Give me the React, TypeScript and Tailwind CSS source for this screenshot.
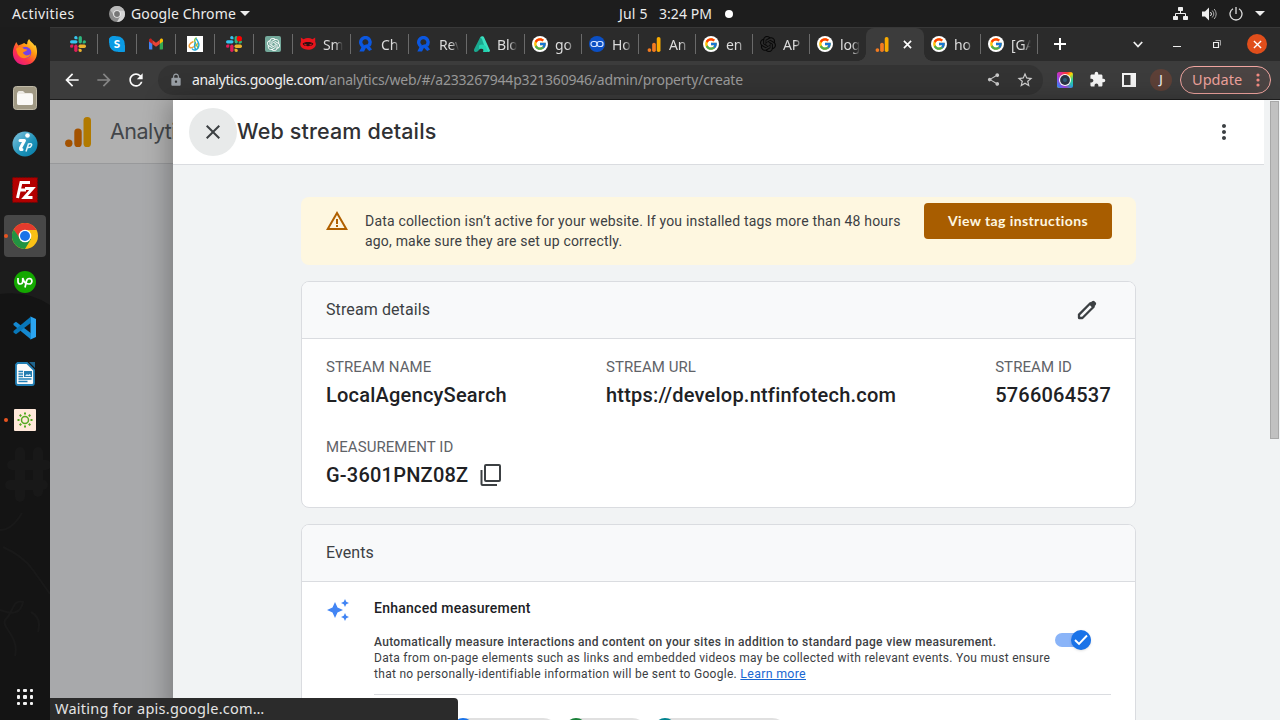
import React from "react";
import {
  MdArrowBack, MdArrowForward, MdRefresh, MdLock, MdShare, MdStarBorder, MdExtension,
  MdMoreVert, MdClose, MdWarningAmber, MdAutoAwesome,
} from "react-icons/md";
import { FcGoogle } from "react-icons/fc";
import { SiOpenai } from "react-icons/si";

const ui = "font-['Noto_Sans','Open_Sans',sans-serif]";
const roboto = "font-[Roboto,sans-serif]";

function Slack({ dot = false }: { dot?: boolean }) {
  return (
    <svg width="16" height="16" viewBox="0 0 16 16">
      <g fill="#36c5f0"><rect x="0" y="4.2" width="7.5" height="3.3" rx="1.65" /><path d="M7.5 3.3H5.9A1.65 1.65 0 1 1 7.5 1.65z" /></g>
      <g fill="#2eb67d"><rect x="8.6" y="0" width="3.3" height="7.5" rx="1.65" /><path d="M12.7 7.5V5.9a1.65 1.65 0 1 1 1.65 1.6z" /></g>
      <g fill="#ecb22e"><rect x="8.5" y="8.6" width="7.5" height="3.3" rx="1.65" /><path d="M8.5 12.7h1.6a1.65 1.65 0 1 1-1.6 1.65z" /></g>
      <g fill="#e01e5a"><rect x="4.2" y="8.5" width="3.3" height="7.5" rx="1.65" /><path d="M3.3 8.5v1.6A1.65 1.65 0 1 1 1.65 8.5z" /></g>
      {dot && <circle cx="13.3" cy="2.7" r="2.7" fill="#f00" />}
    </svg>
  );
}

function Skype() {
  return (
    <svg width="16" height="16" viewBox="0 0 16 16">
      <path d="M4.7 0a4.6 4.6 0 0 1 2.5.3A7.8 7.8 0 0 1 15.700 9 4.700 4.700 0 0 1 9 15.700 7.800 7.800 0 0 1 .3 7.200 4.700 4.700 0 0 1 4.700 0z" fill="#0b9be4" />
      <text x="8" y="12" textAnchor="middle" fontSize="11.5" fontWeight="900" fill="#fff" fontFamily="Lato">S</text>
    </svg>
  );
}

function Gmail() {
  return (
    <svg width="16" height="16" viewBox="0 0 16 16">
      <path d="M1 3.6v8.800c0 .6.4 1 1 1h2.300V6.600z" fill="#4285f4" />
      <path d="M15 3.600v8.800c0 .6-.4 1-1 1h-2.300V6.600z" fill="#34a853" />
      <path d="M11.700 4v4L15 5.500V4c0-1.600-1.700-1.900-2.400-1.300z" fill="#fbbc04" />
      <path d="M4.300 8V4L8 6.800 11.700 4v4L8 10.800z" fill="#ea4335" />
      <path d="M1 4v1.500L4.300 8V4l-.9-1.300C2.700 2.100 1 2.400 1 4z" fill="#c5221f" />
    </svg>
  );
}

function Swirl() {
  return (
    <svg width="16" height="16" viewBox="0 0 16 16">
      <path fill="#fff" d="M0 0h16v16H0z" />
      <g fill="none" strokeWidth="1.400">
        <path d="M6.500 5.500C2.500 7 1 10.500 3 11.500s7-2 8.500-5" stroke="#f2a03a" />
        <path d="M9.500 1.500C5.500 4 9 8 11.500 12.500" stroke="#8fc43a" />
        <path d="M9 2.500c2 3 4 5 2.500 8.500S6.500 15 5 12.500M8.500 6c-1.500 3-1 6 .5 8" stroke="#24a9d6" />
      </g>
    </svg>
  );
}

function ChatGpt() {
  return (
    <span className="flex h-4 w-4 items-center justify-center rounded-[2px] bg-[#74a99b]">
      <SiOpenai size={13} color="#fff" />
    </span>
  );
}

function Ninja() {
  return (
    <svg width="16" height="16" viewBox="0 0 16 16">
      <path d="M.8 1.500 3.500 3.200a10 10 0 0 1 9 0l2.700-1.700v4.200C17.500 10.500 13 13.800 8 13.800S-1.500 10.500 1 5.700z" fill="#e8141c" />
      <path d="M2.800 7.600C3.500 5.500 12.500 5.500 13.200 7.600c.8 3.400-11.200 3.400-10.400 0z" fill="#2b1012" />
      <path d="m4 7.500 3 1.200c-.8 1.200-2.600.8-3-1.200zm8 0L9 8.700c.8 1.200 2.600.8 3-1.200z" fill="#e8141c" />
    </svg>
  );
}

function RMark() {
  return (
    <svg width="16" height="16" viewBox="0 0 16 16">
      <path d="M5.200 10.400A4.700 4.700 0 1 1 10.800 9.500" fill="none" stroke="#0b57e0" strokeWidth="3.400" />
      <path d="M6.500 9q4.500-1.500 4.500.5l3 4-2.800 1.500L8 11.700l-2 3.800H1.300l2.500-5z" fill="#0b57e0" />
    </svg>
  );
}

function AMark() {
  return (
    <svg width="16" height="16" viewBox="0 0 16 16">
      <path d="M6.200 1.200C7-.2 9.500-.2 10 1.200l6 13.300q0 1.500-2 1.500L6 6z" fill="#3ae0c0" />
      <path d="M6.200 1.200 0 13.500c-.5 2 1.500 3 3.500 2L10 9 8 3z" fill="#1aa88f" />
      <path d="M5 9.500c3-2 5-1 7 1l2 5.500H9c1-3 0-4-4-3z" fill="#22d3b0" />
    </svg>
  );
}

function Infinity() {
  return (
    <svg width="16" height="16" viewBox="0 0 16 16">
      <circle cx="8" cy="8" r="8" fill="#0b4fc4" />
      <g fill="none" stroke="#d6e4ff" strokeWidth="1.200"><rect x="2" y="5.500" width="6" height="5" rx="2.200" /><rect x="8" y="5.500" width="6" height="5" rx="2.200" /></g>
    </svg>
  );
}

function GA({ w, h, dim = false }: { w: number; h: number; dim?: boolean }) {
  const a = dim ? "#a35200" : "#f37b20";
  return (
    <svg className="shrink-0" width={w} height={h} viewBox="0 0 26 30">
      <circle cx="3.800" cy="26.200" r="3.700" fill={a} />
      <rect x="9.300" y="11.500" width="7.400" height="18.500" rx="3.600" fill={a} />
      <rect x="18.500" y="0" width="7.500" height="30" rx="3.600" fill={dim ? "#b17a00" : "#f9ab00"} />
    </svg>
  );
}

function SmallGA() {
  return <span className="flex h-4 w-4 shrink-0 items-center justify-center"><GA w={14} h={15} /></span>;
}

function G() {
  return <span className="flex h-4 w-4 shrink-0 items-center justify-center rounded-full bg-white"><FcGoogle size={14} /></span>;
}

function Cross({ size, width }: { size: number; width: number }) {
  return <svg width={size} height={size} viewBox="0 0 10 10"><path d="m1 1 8 8M9 1 1 9" stroke="#fff" strokeWidth={width} /></svg>;
}

const pinned = [<Slack />, <Skype />, <Gmail />, <Swirl />, <Slack dot />, <ChatGpt />];
const tabs: { w: string; icon: React.ReactNode; label: string }[] = [
  { w: "w-[58px]", icon: <Ninja />, label: "Sm" },
  { w: "w-[58px]", icon: <RMark />, label: "Ch" },
  { w: "w-[58px]", icon: <RMark />, label: "Rev" },
  { w: "w-[58px]", icon: <AMark />, label: "Blo" },
  { w: "w-[57px]", icon: <G />, label: "go" },
  { w: "w-[57px]", icon: <Infinity />, label: "Ho" },
  { w: "w-[57px]", icon: <SmallGA />, label: "An" },
  { w: "w-[57px]", icon: <G />, label: "en" },
  { w: "w-[57px]", icon: <SiOpenai size={16} color="#080808" />, label: "AP" },
];

function Sep() {
  return <span className="h-5 w-px shrink-0 bg-[#6a6a6a]" />;
}

function Tab({ w, icon, label, sep = true }: { w: string; icon: React.ReactNode; label: string; sep?: boolean }) {
  return (
    <div className={`flex h-full shrink-0 items-center pl-[7px] ${w}`}>
      {icon}
      <span className="ml-[7px] w-[20px] flex-none overflow-hidden whitespace-nowrap text-[14px] tracking-[-0.2px] text-[#dcdcdc] [mask-image:linear-gradient(90deg,#000_60%,transparent)]">{label}</span>
      <span className="flex-1" />
      {sep && <Sep />}
    </div>
  );
}

function TopBar() {
  return (
    <div className="grid h-[27px] shrink-0 grid-cols-[1fr_auto_1fr] items-center bg-[#1d1d1d] text-[14px] text-[#ececec]">
      <div className="flex items-center">
        <span className="ml-3 w-[97px] whitespace-nowrap tracking-[0.420px]">Activities</span>
        <svg width="16" height="16" viewBox="0 0 16 16">
          <circle cx="8" cy="8" r="8" fill="#8c8c8c" />
          <path d="M8 4.500h7.200A8 8 0 0 0 1.200 4L4.800 9.500z" fill="#b9b9b9" />
          <path d="M15.200 4.500H8l3.300 5.500L8 16a8 8 0 0 0 7.200-11.500z" fill="#d5d5d5" />
          <circle cx="8" cy="8" r="3.800" fill="#f0f0f0" /><circle cx="8" cy="8" r="2.900" fill="#777" />
        </svg>
        <span className="ml-[6px] w-[104px] whitespace-nowrap tracking-[0.120px]">Google Chrome</span>
        <svg className="ml-[5px]" width="10" height="5" viewBox="0 0 10 5"><path d="M0 0h10L5 5z" fill="#ececec" /></svg>
      </div>
      <div className="flex items-center pl-[72px]">
        <span className="w-[30px] whitespace-nowrap pb-px tracking-[0.200px]">Jul 5</span>
        <span className="ml-[10px] w-[54px] whitespace-nowrap pb-px tracking-[0.050px]">3:24 PM</span>
        <span className="ml-[12px] h-2 w-2 rounded-full bg-white" />
      </div>
      <div className="flex items-center justify-end pr-[15px] text-[#eee]">
        <svg width="15" height="14" viewBox="0 0 15 14" fill="#eee"><rect x="5" width="5" height="4" rx=".7" /><rect y="9" width="5" height="4" rx=".7" /><rect x="10" y="9" width="5" height="4" rx=".7" /><path d="M2.500 9V6.500h10V9M7.500 4v2.500" fill="none" stroke="#eee" /></svg>
        <svg className="ml-[14px]" width="15" height="14" viewBox="0 0 15 14"><path d="M0 4.500h3L7 .5v13l-4-4H0z" fill="#eee" /><path d="M8.500 5q2 2 0 4" fill="none" stroke="#eee" /><path d="M10.200 3.500q3.200 3.500 0 7M12.200 2q4 5 0 10" fill="none" stroke="#aaa" /></svg>
        <svg className="ml-[12px]" width="14" height="14" viewBox="0 0 14 14" fill="none" stroke="#ddd" strokeWidth="1.300"><path d="M4 1.800a6 6 0 1 0 6 0M7 0v7" /></svg>
        <svg className="ml-[12px]" width="10" height="5" viewBox="0 0 10 5"><path d="M0 0h10L5 5z" fill="#ececec" /></svg>
      </div>
    </div>
  );
}

function DockItem({ children, active = false, dot = false }: { children: React.ReactNode; active?: boolean; dot?: boolean }) {
  return (
    <div className="flex h-[46px] shrink-0 items-center justify-center">
      <div className={`relative flex h-[42px] w-[42px] items-center justify-center rounded ${active ? "bg-[#474747]" : ""}`}>
        {children}
        {dot && <span className="absolute left-0 top-[19px] h-1 w-1 rounded-full bg-[#e95420]" />}
      </div>
    </div>
  );
}

function Dock() {
  return (
    <div className="relative flex w-[50px] shrink-0 flex-col overflow-hidden bg-[#1c1c1c] pt-[2px]">
      <svg className="absolute inset-0" width="50" height="693" viewBox="0 0 50 693">
        <path d="M0 267Q28 263 50 278V693H0z" fill="#141414" />
        <g fill="none" stroke="#191919" strokeWidth="2"><path d="M0 503q12 0 22-17M3 520q20 9 30 23t17 24M0 583q20 8 23-8c-10-3-10 10-17 17s14 17 9 37M31 585q11 6 7 20" /></g>
        <g stroke="#181818" strokeWidth="10" strokeLinecap="round"><path d="M12 438h34M10 458h33M20 425v45M38 425v40" /></g>
      </svg>
      <div className="relative flex flex-1 flex-col">
        <DockItem>
          <svg width="26" height="26" viewBox="0 0 26 26">
            <defs><linearGradient id="fx" x1="1" y1="0" x2=".2" y2="1"><stop offset="0" stopColor="#fff44f" /><stop offset=".4" stopColor="#ff980e" /><stop offset=".7" stopColor="#ff3647" /><stop offset="1" stopColor="#e31587" /></linearGradient></defs>
            <path d="M3 5.500 4.200 3l2 3.500 4-1.500c.5-.5 1-.8 2-1 .8 1 2 1.500 3 1 0-2 .6-3.600 2-5 .5 2.300 3.500 3.300 5.300 6.500l1-.2C27 13 25 26 13 26 2 26-2 15 3 5.500z" fill="url(#fx)" />
            <circle cx="13.500" cy="13.500" r="5.800" fill="#7542e5" />
            <path d="M4 10c3-3 6-2 8 0l3 .5c0 2-4 2-4 3.500 2 3 5 3 7.500 1-1 5-10 6-13 0z" fill="#ff8a16" />
          </svg>
        </DockItem>
        <DockItem>
          <svg width="24" height="24" viewBox="0 0 24 24"><rect x=".5" y=".5" width="23" height="23" rx="3" fill="#a09984" stroke="#beb8a6" /><path d="M5 6q0-1 1-1h4l2 2h6q2 0 2 2v8q0 2-2 2H6q-2 0-2-2V7z" fill="#ece9e2" /><rect x="4" y="8" width="16" height="11" rx="2" fill="#faf9f6" /></svg>
        </DockItem>
        <DockItem>
          <svg width="26" height="26" viewBox="0 0 26 26">
            <defs><linearGradient id="ip" x1="0" y1="0" x2="1" y2="1"><stop stopColor="#85c5df" /><stop offset=".6" stopColor="#1c91b8" /><stop offset="1" stopColor="#077aa5" /></linearGradient></defs>
            <circle cx="13" cy="13" r="12.500" fill="url(#ip)" />
            <circle cx="15.500" cy="4.500" r="2.300" fill="#fff" />
            <path d="M8 9.500h4.500L8.500 17q-.5 2 1.500 1.500" fill="none" stroke="#fff" strokeWidth="3" strokeLinejoin="round" strokeLinecap="round" />
            <path d="m14 20.500 2.500-7.500q4-1 3 1.500t-4 2" fill="none" stroke="#e6f5fa" strokeWidth="1.500" />
          </svg>
        </DockItem>
        <DockItem>
          <svg width="26" height="26" viewBox="0 0 26 26"><rect x=".7" y=".7" width="24.600" height="24.600" fill="#b30000" stroke="#830000" strokeDasharray="2 1" /><path d="M5.500 21 9 5.500h9M7.500 13H14M13 11.500h7.500L12.500 20.500h8" fill="none" stroke="#fff" strokeWidth="3" /></svg>
        </DockItem>
        <DockItem active dot>
          <svg width="26" height="26" viewBox="0 0 26 26"><circle cx="13" cy="13" r="13" fill="#fbc116" /><path d="M13 7h11.500A13 13 0 0 0 1.700 6.500L8 17z" fill="#e33b2e" /><path d="M1.700 6.500A13 13 0 0 0 13 26l6-10-11-.5z" fill="#229342" /><circle cx="13" cy="13" r="6.300" fill="#fff" /><circle cx="13" cy="13" r="5" fill="#1a73e8" /></svg>
        </DockItem>
        <DockItem>
          <svg width="22" height="22" viewBox="0 0 22 22"><circle cx="11" cy="11" r="11" fill="#14a800" /><path d="M4 7v3.500q0 2.500 2.300 2.500t2.400-2.500V7q1.300 4.500 3.500 5.500M11 16.500l1.500-6.500q.6-2.500 2.800-2.500A2.700 2.700 0 1 1 15 13q-1.800 0-2.800-.8" fill="none" stroke="#fff" strokeWidth="1.700" /></svg>
        </DockItem>
        <DockItem>
          <svg width="24" height="24" viewBox="0 0 24 24"><path d="M17.500.5 23 3v18l-5.500 2.500z" fill="#2ba4f0" /><path d="M.5 7.500 3 5.800l15 11.500v6.200L.5 9z" fill="#1589d1" /><path d="M.5 16.500 3 18.200 18 6.700V.5L.5 15z" fill="#0877b9" /></svg>
        </DockItem>
        <DockItem>
          <svg width="20" height="24" viewBox="0 0 20 24"><path d="M2.500 1H12l7 7v13q0 2-2 2H3q-2 0-2-2V2.500z" fill="#fafafa" stroke="#207eb4" strokeWidth="1.800" /><path d="M14 0h6v6z" fill="#1e638c" /><path d="M3.500 9.500H8M3.500 12H8M3.500 14.500H8M3.500 17h13M3.500 19.500h9" stroke="#2382b9" strokeWidth="1.300" /><path d="M9 9h8v6H9z" fill="#247cae" /><path d="m10 14 2-2 1 1 2-1 1 2z" fill="#dcefff" /></svg>
        </DockItem>
        <DockItem dot>
          <svg width="22" height="22" viewBox="0 0 22 22"><rect width="22" height="22" rx="1" fill="#ffe8da" /><g fill="none" stroke="#55aa22" strokeWidth="1.500"><circle cx="11" cy="11" r="3.500" /><path d="M11 3.500v2M11 16.500v2M3.500 11h2M16.500 11h2M5.700 5.700l1.500 1.500M14.800 14.800l1.500 1.500M16.300 5.700l-1.500 1.500M7.200 14.800l-1.500 1.500" strokeWidth="2" /></g></svg>
        </DockItem>
        <div className="mb-[15px] mt-auto grid grid-cols-3 justify-center gap-[3px] self-center">
          {Array.from({ length: 9 }, (_, i) => <span key={i} className="h-[3.500px] w-[3.500px] rounded-[1px] bg-[#f2f2f2]" />)}
        </div>
      </div>
    </div>
  );
}

function TabStrip() {
  return (
    <div className="flex h-[34px] shrink-0 items-center border-t border-[#383838] bg-[#2b2b2b] pl-[9px]">
      <div className="flex h-full shrink-0 items-center pb-px">
        {pinned.map((icon, i) => (
          <div key={i} className="flex h-full w-[39px] shrink-0 items-center pl-[11px]">{icon}<span className="flex-1" /><Sep /></div>
        ))}
        {tabs.map((t, i) => <Tab key={i} {...t} />)}
        <Tab w="w-[56px]" icon={<G />} label="log" sep={false} />
      </div>
      <div className="relative flex h-full w-[58px] shrink-0 items-center rounded-t-lg bg-[#3c3c3c] pb-px pl-[8px]">
        <span className="absolute bottom-0 left-[-8px] h-2 w-2 bg-[radial-gradient(circle_at_0_0,transparent_7.500px,#3c3c3c_8px)]" />
        <span className="absolute bottom-0 right-[-8px] h-2 w-2 bg-[radial-gradient(circle_at_100%_0,transparent_7.500px,#3c3c3c_8px)]" />
        <SmallGA />
        <span className="ml-[13px]"><Cross size={9} width={1.800} /></span>
      </div>
      <div className="flex h-full min-w-0 flex-1 items-center pb-px">
        <Tab w="w-[57px]" icon={<G />} label="ho" />
        <Tab w="w-[57px]" icon={<G />} label="[GA" />
        <svg className="ml-[16px]" width="12" height="12" viewBox="0 0 12 12"><path d="M6 0v12M0 6h12" stroke="#fff" strokeWidth="2" /></svg>
        <span className="flex-1" />
        <svg width="10" height="7" viewBox="0 0 10 7"><path d="m.8 1 4.200 4.500L9.200 1" fill="none" stroke="#eee" strokeWidth="1.800" /></svg>
        <span className="ml-[30px] mt-[4px] h-px w-2 bg-[#eee]" />
        <svg className="ml-[32px]" width="8" height="8" viewBox="0 0 8 8" fill="none" stroke="#eee"><path d="M.5 2.500h5v5h-5z" strokeWidth="1.200" /><path d="M2.500.5h5v5" strokeOpacity=".6" /></svg>
        <span className="ml-[26px] mr-[13px] flex h-5 w-5 items-center justify-center rounded-full bg-[#e04e1b]"><Cross size={9} width={1.500} /></span>
      </div>
    </div>
  );
}

function Toolbar() {
  return (
    <div className="flex h-[39px] shrink-0 items-center border-b border-[#1d1d1d] bg-[#3c3c3c] pb-px pl-[12px]">
      <MdArrowBack size={20} color="#fafafa" />
      <MdArrowForward className="ml-[12px]" size={20} color="#858585" />
      <MdRefresh className="ml-[12px]" size={20} color="#fafafa" />
      <div className="ml-[12px] flex h-[30px] w-[885px] items-center rounded-full bg-[#333] pl-[11px]">
        <MdLock size={14} color="#9aa0a6" />
        <span className="ml-[9px] w-[553px] whitespace-nowrap pb-px text-[14px] tracking-[-0.200px] text-[#9a9a9a]">
          <span className="tracking-[-0.330px] text-[#f4f4f4]">analytics.google.com</span>/analytics/web/#/a233267944p321360946/admin/property/create
        </span>
        <span className="flex-1" />
        <MdShare size={15} color="#c8c8c8" />
        <MdStarBorder className="ml-[15px] mr-[9px]" size={18} color="#d0d0d0" />
      </div>
      <svg className="ml-[14px]" width="16" height="16" viewBox="0 0 16 16">
        <defs><linearGradient id="cam" x1="0" y1="0" x2="1" y2="1"><stop stopColor="#f01ca5" /><stop offset=".35" stopColor="#fa3d35" /><stop offset=".5" stopColor="#ffd800" /><stop offset=".7" stopColor="#36d48c" /><stop offset="1" stopColor="#18a9ff" /></linearGradient><linearGradient id="cam2" x1="0" y1="1" x2=".7" y2=".5"><stop stopColor="#1a9dff" /><stop offset=".5" stopColor="#a63fe2" /><stop offset="1" stopColor="#a63fe2" stopOpacity="0" /></linearGradient></defs>
        <rect width="16" height="16" rx="2.500" fill="url(#cam)" /><rect width="16" height="16" rx="2.500" fill="url(#cam2)" />
        <circle cx="8" cy="8" r="6" fill="#fff" /><circle cx="8" cy="8" r="4.900" fill="#2a3444" /><circle cx="8" cy="8" r="2" fill="#315d7a" />
      </svg>
      <MdExtension className="ml-[16px]" size={17} color="#f4f4f4" />
      <svg className="ml-[16px]" width="14" height="14" viewBox="0 0 14 14"><path d="M0 0h14v14H0zM2 2v10h6.500V2z" fill="#f4f4f4" fillRule="evenodd" /></svg>
      <span className="ml-[14px] flex h-[22px] w-[22px] items-center justify-center rounded-full bg-[#5d4037] text-[12px] font-medium text-[#eee]">J</span>
      <div className="ml-[8px] flex h-[28px] w-[91px] items-center rounded-full border border-[#f0a5a0] bg-[#4b4443] pl-[11px] text-[14.500px] text-[#eda29c]">
        <span className="w-[52px] tracking-[0.050px]">Update</span>
        <svg className="ml-[12px]" width="4" height="14" viewBox="0 0 4 14" fill="#f28b82"><circle cx="2" cy="2" r="1.600" /><circle cx="2" cy="7" r="1.600" /><circle cx="2" cy="12" r="1.600" /></svg>
      </div>
    </div>
  );
}

function Field({ label, value, children }: { label: string; value: string; children?: React.ReactNode }) {
  return (
    <div>
      <div className="text-[15px] leading-5 tracking-[0.080px] text-[#5f6368]">{label}</div>
      <div className="flex h-9 items-center text-[20px] font-medium leading-8 tracking-[0.220px] text-[#202124]">{value}{children}</div>
    </div>
  );
}

function CardHeader({ title, children }: { title: string; children?: React.ReactNode }) {
  return (
    <div className="flex h-[57px] shrink-0 items-center justify-between border-b border-[#dadce0] bg-[#f8f9fa] pl-6 pr-9 text-[16px] tracking-[0.100px] text-[#3c4043]">
      {title}{children}
    </div>
  );
}

function Chip({ w, color }: { w: string; color: string }) {
  return <div className={`h-8 rounded-full bg-[#e0e0e0] ${w}`}><div className={`h-[22px] w-[22px] rounded-full ${color}`} /></div>;
}

function Pencil() {
  return (
    <svg width="24" height="24" viewBox="0 0 24 24">
      <path d="M4 20v-3.400L15.300 5.300l3.400 3.400L7.400 20z" fill="none" stroke="#3c4043" strokeWidth="2.300" strokeLinejoin="round" />
      <path d="m14 6.300 3-3q1.300-1 2.500 0l1.200 1.200q1 1.300 0 2.500l-3 3z" fill="#3c4043" />
    </svg>
  );
}

function Copy() {
  return (
    <svg className="ml-[12px]" width="22" height="24" viewBox="0 0 22 24" fill="none" stroke="#3c4043" strokeWidth="2" strokeLinejoin="round">
      <path d="M6 2h13q1 0 1 1v14q0 1-1 1H6q-1 0-1-1V3q0-1 1-1z" />
      <path d="M1.500 7v14q0 1 1 1H17" />
    </svg>
  );
}

function Panel() {
  return (
    <div className={`relative flex w-[1091px] shrink-0 flex-col bg-[#f1f3f4] shadow-[-4px_0_24px_rgba(0,0,0,0.28)] ${roboto}`}>
      <header className="flex h-[65px] shrink-0 items-center border-b border-[#dadce0] bg-white pl-4 pr-[28px]">
        <span className="flex h-12 w-12 items-center justify-center rounded-full bg-[#e8eaea]"><MdClose size={24} color="#3c4043" /></span>
        <h1 className="whitespace-nowrap pb-0.5 font-[Inter,sans-serif] text-[21.500px] font-medium tracking-[0.150px] text-[#303134]">Web stream details</h1>
        <MdMoreVert className="ml-auto" size={24} color="#3c4043" />
      </header>
      <div className="flex flex-1 flex-col overflow-hidden px-32 pt-8">
        <div className="flex h-[68px] shrink-0 items-start rounded-lg bg-[#fef7e0] pl-6 pr-6">
          <MdWarningAmber className="mt-3" size={24} color="#b06000" strokeWidth={0} />
          <p className="ml-4 mt-[14px] w-[545px] whitespace-nowrap text-[14px] leading-5 tracking-[0.190px] text-[#3c4043]">
            Data collection isn’t active for your website. If you installed tags more than 48 hours<br />ago, make sure they are set up correctly.
          </p>
          <button className="ml-auto mt-[6px] h-9 w-[188px] shrink-0 whitespace-nowrap rounded bg-[#a85d00] pb-px font-[Lato,sans-serif] text-[14px] font-bold tracking-[0.400px] text-[#fef7e0]">View tag instructions</button>
        </div>
        <section className="mt-4 flex h-[227px] shrink-0 flex-col overflow-hidden rounded-lg border border-[#dadce0] bg-white">
          <CardHeader title="Stream details"><Pencil /></CardHeader>
          <div className="flex justify-between px-6 pt-[18px]">
            <Field label="STREAM NAME" value="LocalAgencySearch" />
            <Field label="STREAM URL" value="https://develop.ntfinfotech.com" />
            <Field label="STREAM ID" value="5766064537" />
          </div>
          <div className="px-6 pt-6">
            <Field label="MEASUREMENT ID" value="G-3601PNZ08Z"><Copy /></Field>
          </div>
        </section>
        <section className="mt-4 flex h-[300px] shrink-0 flex-col overflow-hidden rounded-lg border border-[#dadce0] bg-white">
          <CardHeader title="Events" />
          <div className="flex px-6 pt-4">
            <MdAutoAwesome className="shrink-0" size={24} color="#4285f4" />
            <div className="ml-6 flex-1">
              <h2 className="text-[14px] font-medium leading-5 tracking-[0.250px] text-[#202124]">Enhanced measurement</h2>
              <div className="mt-4 flex justify-between border-b border-[#dadce0] pb-3">
                <p className="whitespace-nowrap text-[12px] leading-4 tracking-[0.295px] text-[#3c4043]">
                  <span className="font-medium tracking-[0.306px]">Automatically measure interactions and content on your sites in addition to standard page view measurement.</span><br />
                  Data from on-page elements such as links and embedded videos may be collected with relevant events. You must ensure<br />
                  that no personally-identifiable information will be sent to Google. <a className="text-[12.400px] text-[#1967d2] underline">Learn more</a>
                </p>
                <div className="mr-5 mt-[-1px] flex h-[14px] w-9 shrink-0 items-center justify-end rounded-full bg-[#8ab4f8]">
                  <span className="flex h-5 w-5 shrink-0 items-center justify-center rounded-full bg-[#1a73e8] shadow">
                    <svg width="14" height="12" viewBox="0 0 14 12"><path d="m1 6 4 4L13 1.500" fill="none" stroke="#fff" strokeWidth="1.900" /></svg>
                  </span>
                </div>
              </div>
              <div className="mt-[23px] flex gap-[6px] pl-[78px]">
                <Chip w="w-[107px]" color="bg-[#1a73e8]" />
                <Chip w="w-[83px]" color="bg-[#188038]" />
                <Chip w="w-[134px]" color="bg-[#00838f]" />
              </div>
            </div>
          </div>
        </section>
      </div>
    </div>
  );
}

export default function App() {
  return (
    <div className={`flex h-[720px] w-[1280px] flex-col overflow-hidden bg-[#1d1d1d] ${ui}`}>
      <TopBar />
      <div className="flex min-h-0 flex-1">
        <Dock />
        <div className="relative flex min-w-0 flex-1 flex-col overflow-hidden">
          <TabStrip />
          <Toolbar />
          <div className="flex min-h-0 flex-1">
            <div className="w-[123px] shrink-0 overflow-hidden bg-[#a8a9ab]">
              <div className="flex h-16 items-center border-b border-[#98999b] bg-[#b0b0b0] pl-[15px]">
                <GA w={26} h={30} dim />
                <span className="ml-[19px] whitespace-nowrap font-[Inter,sans-serif] text-[21.500px] tracking-[-0.500px] text-[#43464a]">Analytics</span>
              </div>
            </div>
            <Panel />
            <div className="relative flex w-4 shrink-0 justify-end bg-[#f1f3f4] pr-px pt-px">
              <div className="h-[338px] w-[9px] border border-[#a8a8a8] bg-[#c1c1c1]" />
            </div>
          </div>
          <div className="absolute bottom-0 left-0 h-[22px] w-[408px] rounded-tr bg-[#2b2b2b] pl-[5px] text-[14.500px] leading-[21px] tracking-[0.240px] text-[#e4e4e4]">Waiting for apis.google.com…</div>
        </div>
      </div>
    </div>
  );
}
